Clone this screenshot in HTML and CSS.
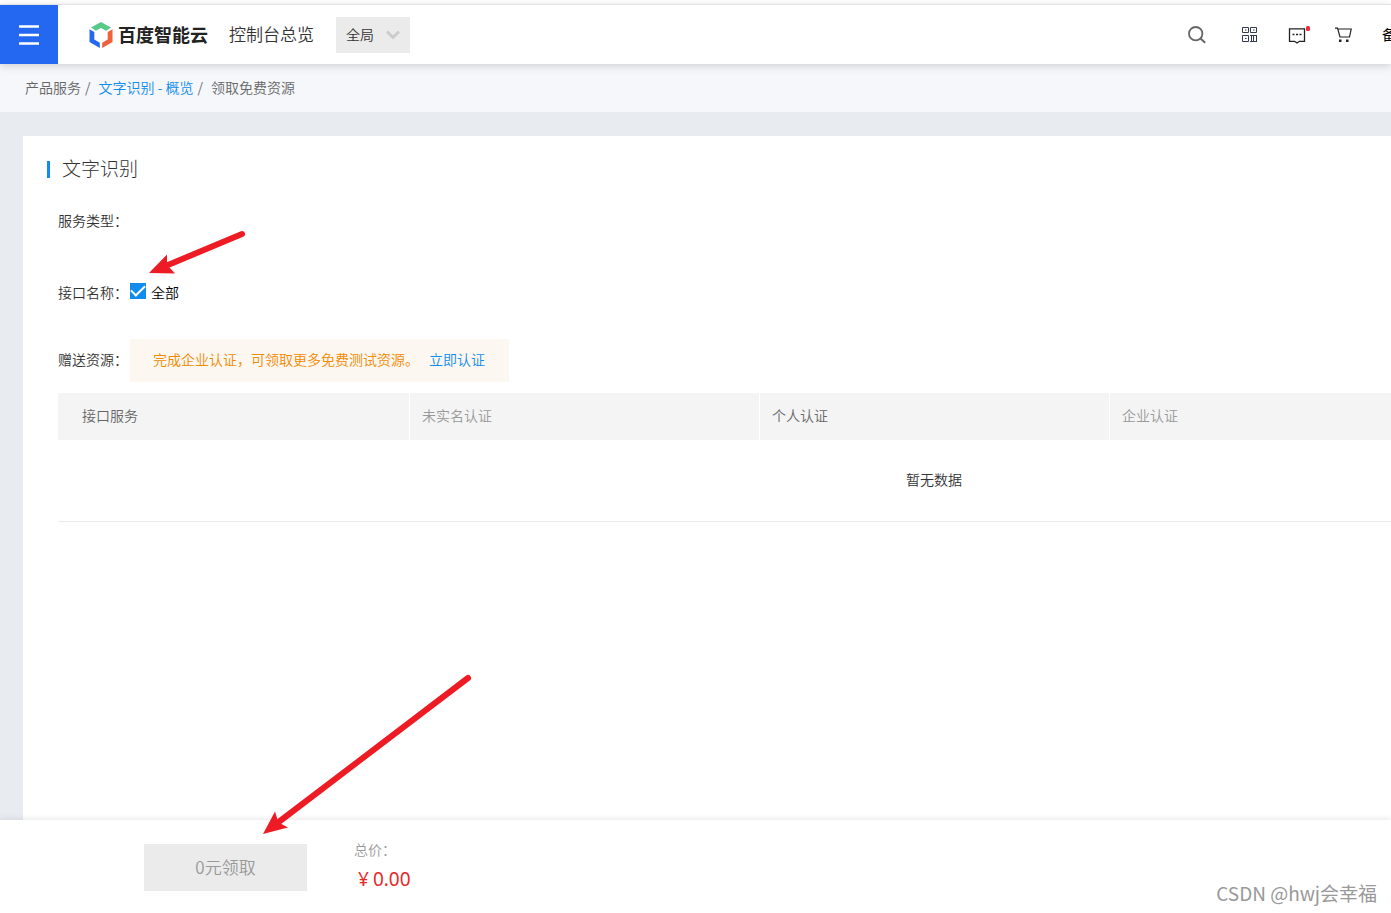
FILE: index.html
```html
<!DOCTYPE html>
<html lang="zh-CN">
<head>
<meta charset="utf-8">
<meta name="viewport" content="width=device-width, initial-scale=1">
<title>领取免费资源 - 百度智能云</title>
<link rel="stylesheet" href="styles.css">
</head>
<body>
<div class="page">
  <header class="topbar">
    <button class="menu-button" type="button" aria-label="菜单">
      <svg width="20" height="20" viewBox="0 0 20 20" fill="none" stroke="#fff" stroke-width="2.500"><path d="M0 1.500h20M0 10h20M0 18.500h20"/></svg>
    </button>
    <a class="logo" href="#">
      <svg width="24" height="26" viewBox="0 0 24 26" aria-hidden="true">
        <path fill="#59c98b" d="M2 5.500 12 0l10 5.500-4.800 3.300L12 6 6.800 8.800z"/>
        <path fill="#2468f2" d="M0.500 7.300 5.300 10v7.500l5.500 3.200V26L0.500 20z"/>
        <path fill="#f1603d" d="M23.500 7.300 18.700 10v7.500l-5.500 3.200V26l10.300-6z"/>
      </svg>
      <span>百度智能云</span>
    </a>
    <a class="console-link" href="#">控制台总览</a>
    <div class="region">
      <select class="region-select" aria-label="区域"><option>全局</option></select>
      <svg class="region-arrow" width="14" height="10" viewBox="0 0 14 10" fill="none" stroke="#ccc" stroke-width="3"><path d="M1 1.500l6 6 6-6"/></svg>
    </div>
    <nav class="tools">
      <button class="tool" type="button" aria-label="搜索">
        <svg width="18" height="18" viewBox="0 0 18 18" fill="none" stroke="#666" stroke-width="1.800"><circle cx="7.700" cy="7.700" r="6.700"/><path d="M12.500 12.500l4.700 4.300" stroke-width="2"/></svg>
      </button>
      <button class="tool tool-qr" type="button" aria-label="二维码">
        <svg width="17" height="17" viewBox="0 0 17 17" fill="none" stroke="#333b4d"><path d="M1.500 1.500h6v5h-6zM9.500 1.500h6v5h-6zM1.500 9.500h6v6h-6zM9 9.500h7M9 15.500h7M10.500 9.500v6M12.500 9.500v6M15.500 9.500v6"/><path d="M4 4h1.500M12 4h1.500M4 12.500h1.500"/></svg>
      </button>
      <button class="tool tool-message" type="button" aria-label="消息">
        <svg width="22" height="18" viewBox="0 0 22 18" fill="none" stroke="#222"><path stroke-width="1.300" d="M1.500 2.800h15v12.500h-5l-2.500 1.700-2.500-1.700h-5z"/><path stroke-width="1.600" d="M4.500 8.500h2M8 8.500h2M11.500 8.500h2"/><rect x="18" y="0" width="4" height="5" rx="1.500" fill="#f02b36" stroke="none"/></svg>
      </button>
      <button class="tool" type="button" aria-label="购物车">
        <svg width="17" height="15" viewBox="0 0 17 15" fill="none" stroke="#222" stroke-width="1.200"><path d="M0 1.200h2.500L5 10h9.500l1.700-8H3"/><path fill="#222" stroke="none" d="M4 12.500h2.500v2.500H4zM11 12.500h2.500v2.500H11z"/></svg>
      </button>
      <a class="filing" href="#">备</a>
    </nav>
  </header>

  <nav class="crumbs" aria-label="面包屑">
    <span>产品服务</span><span>/</span><a href="#">文字识别 - 概览</a><span>/</span><span>领取免费资源</span>
  </nav>

  <main class="workspace">
    <section class="card">
      <h1 class="card-title">文字识别</h1>
      <div class="fields">
        <div class="field field-type"><span class="label">服务类型：</span></div>
        <div class="field field-api">
          <span class="label">接口名称：</span>
          <input class="check" type="checkbox" id="all" checked>
          <label class="check-label" for="all">全部</label>
        </div>
        <div class="field field-gift">
          <span class="label">赠送资源：</span>
          <p class="notice">完成企业认证，可领取更多免费测试资源。<a href="#">立即认证</a></p>
        </div>
        <table class="resources">
          <thead>
            <tr><th class="first">接口服务</th><th class="muted">未实名认证</th><th>个人认证</th><th class="muted">企业认证</th><th></th></tr>
          </thead>
          <tbody><tr><td colspan="5">暂无数据</td></tr></tbody>
        </table>
      </div>
    </section>
  </main>

  <footer class="paybar">
    <button class="claim" type="button" disabled>0元领取</button>
    <div class="total">
      <span class="total-label">总价：</span>
      <strong class="total-price"><span>¥</span><span>0.00</span></strong>
    </div>
    <span class="watermark">CSDN @hwj会幸福</span>
  </footer>

  <svg class="arrow arrow-check" width="100" height="46" viewBox="147 230 100 46" aria-hidden="true"><path d="M242 234 168 265" stroke="#ed1c24" stroke-width="6" stroke-linecap="round"/><path fill="#ed1c24" d="M149 273l18-18.500v8l2 4.500 6 6.500z"/></svg>
  <svg class="arrow arrow-claim" width="214" height="164" viewBox="260 672 214 164" aria-hidden="true"><path d="M468 678 280 821" stroke="#ed1c24" stroke-width="6" stroke-linecap="round"/><path fill="#ed1c24" d="M263 834l12-22.500 2.500 8 4 4.500 6.500 3.500z"/></svg>
</div>
</body>
</html>
```

FILE: styles.css
```css
* { box-sizing: border-box; }

body {
  margin: 0;
  font: 350 14px/20px "Noto Sans CJK SC", sans-serif;
  color: #333;
  background: #fff;
}

a { color: #108cee; text-decoration: none; }
button { padding: 0; border: 0; background: none; font: inherit; }

.page {
  position: relative;
  display: flex;
  flex-direction: column;
  min-height: 100vh;
  padding-top: 4px;
  overflow: hidden;
}

.topbar {
  position: relative;
  z-index: 1;
  display: flex;
  align-items: center;
  height: 60px;
  border-top: 1px solid #e3e3e3;
  background: #fff;
  box-shadow: 0 2px 8px rgba(0, 0, 0, .16);
}

.menu-button {
  display: grid;
  place-items: center;
  width: 58px;
  height: 59px;
  background: #2468f2;
}

.logo {
  display: flex;
  align-items: center;
  gap: 5px;
  margin-left: 31px;
  color: #222;
  font-size: 18px;
  font-weight: 700;
}

.logo span { padding-bottom: 2px; }

.console-link {
  margin-left: 21px;
  padding-bottom: 2px;
  color: #333;
  font-size: 17px;
}

.region {
  position: relative;
  width: 74px;
  height: 36px;
  margin-left: 22px;
}

.region-select {
  width: 100%;
  height: 100%;
  padding: 0 10px 2px;
  border: 0;
  border-radius: 0;
  appearance: none;
  background: #ebebeb;
  color: #333;
  font: inherit;
}

.region-arrow {
  position: absolute;
  top: 13px;
  right: 10px;
  pointer-events: none;
}

.tools {
  display: flex;
  align-items: center;
  margin-left: auto;
}

.tool { display: flex; margin-right: 30px; }
.tool-qr { margin-left: 5px; }
.tool-message { margin-right: 25px; }

.filing {
  width: 9px;
  padding-bottom: 2px;
  overflow: hidden;
  color: #000;
  font-weight: 400;
  white-space: nowrap;
}

.crumbs {
  display: flex;
  align-items: center;
  gap: 4px;
  height: 48px;
  padding: 0 0 2px 25px;
  background: #f5f7fb;
  color: #666;
}

.crumbs a, .crumbs span:last-child { margin-left: 4px; }

.workspace {
  display: flex;
  flex: 1;
  padding: 24px 0 0 23px;
  background: #e8ebf0;
}

.card {
  flex: 1;
  min-width: 0;
  padding: 22px 0 24px 24px;
  background: #fff;
}

.card-title {
  display: flex;
  align-items: flex-end;
  gap: 12px;
  margin: 0;
  font-size: 19px;
  font-weight: 300;
  line-height: 20px;
}

.card-title::before {
  content: "";
  width: 3px;
  height: 17px;
  background: #108cee;
}

.fields { padding-left: 11px; }
.field { display: flex; align-items: center; }
.label { width: 72px; }
.field-type { margin-top: 32px; }
.field-api { margin-top: 52px; }
.field-gift { margin-top: 37px; }
.field-gift .label { padding-bottom: 3px; }

.check {
  display: grid;
  place-items: center;
  width: 16px;
  height: 16px;
  margin: 0 5px 2px 0;
  appearance: none;
  border: 1px solid #108cee;
}

.check:checked { background: #108cee; }

.check:checked::after {
  content: "";
  width: 12px;
  height: 6px;
  margin-bottom: 4px;
  border: solid #fff;
  border-width: 0 0 2px 2px;
  transform: rotate(-45deg);
}

.check-label { color: #000; }

.notice {
  margin: 0;
  padding: 10px 24px 13px 23px;
  background: #fcf7f1;
  color: #f38900;
}

.notice a { margin-left: 10px; }

.resources {
  width: 1752px;
  margin-top: 11px;
  border-collapse: separate;
  border-spacing: 0;
  table-layout: fixed;
}

.resources th {
  width: 350px;
  height: 47px;
  padding: 0 12px 3px;
  border-right: 1px solid #fff;
  background: #f4f4f4;
  color: #666;
  font-weight: inherit;
  text-align: left;
}

.resources .first { width: 352px; padding-left: 24px; }
.resources .muted { color: #999; }

.resources td {
  height: 82px;
  padding: 0 0 3px;
  border-bottom: 1px solid #ebebeb;
  text-align: center;
}

.paybar {
  position: relative;
  display: flex;
  align-items: flex-start;
  height: 93px;
  padding: 24px 14px 0 144px;
  background: #fff;
  box-shadow: 0 -1px 6px rgba(0, 0, 0, .1);
}

.claim {
  width: 163px;
  height: 47px;
  padding-bottom: 2px;
  background: #ebebeb;
  color: #999;
  font-size: 17px;
}

.total {
  display: flex;
  flex-direction: column;
  gap: 10px;
  margin: -5px 0 0 47px;
}

.total-label { color: #999; }

.total-price {
  display: flex;
  gap: 4px;
  padding-left: 4px;
  color: #e62828;
  font-family: "Noto Sans", sans-serif;
  font-size: 19px;
  font-weight: 400;
}

.watermark {
  align-self: flex-end;
  margin: 0 0 10px auto;
  color: #999;
  font-size: 19px;
  font-weight: 400;
}

.arrow { position: absolute; z-index: 2; pointer-events: none; }
.arrow-check { left: 147px; top: 230px; }
.arrow-claim { left: 260px; top: 672px; }
```
